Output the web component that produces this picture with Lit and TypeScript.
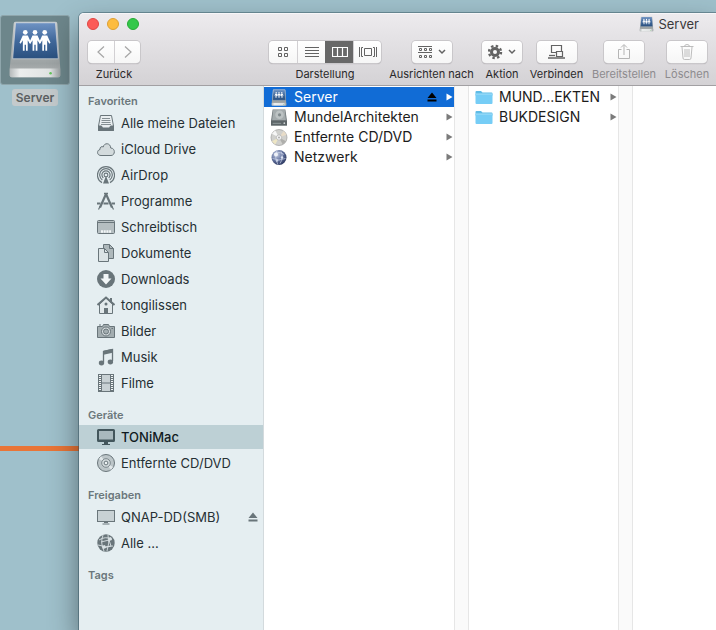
import { LitElement, css, html, svg, type TemplateResult } from "lit";
import { customElement, state } from "lit/decorators.js";
import { classMap } from "lit/directives/class-map.js";

type Icon = TemplateResult;

interface Entry {
  label: string;
  icon: Icon;
  eject?: boolean;
}

const person = (x: number) => svg`
  <g transform="translate(${x} 0)">
    <circle cx="0" cy="16.800" r="2.400" />
    <path d="M-2.600 20H2.600L6 27.500 4.800 28.500 2.500 25V35.800H.7V29.500H-.7V35.800H-2.500V25L-4.800 28.500-6 27.500Z" />
  </g>`;

const driveShape = svg`
  <defs>
    <linearGradient id="panel" x1="0" y1="0" x2="0" y2="1">
      <stop offset="0" stop-color="#6f93c4" /><stop offset=".5" stop-color="#41699c" /><stop offset="1" stop-color="#2a507f" />
    </linearGradient>
    <linearGradient id="shell" x1="0" y1="0" x2="0" y2="1">
      <stop offset="0" stop-color="#c9cdce" /><stop offset=".75" stop-color="#9da3a4" /><stop offset="1" stop-color="#b4b8b9" />
    </linearGradient>
    <linearGradient id="front" x1="0" y1="0" x2="1" y2="0">
      <stop offset="0" stop-color="#b5babb" /><stop offset=".2" stop-color="#eceeee" /><stop offset=".8" stop-color="#dfe2e2" /><stop offset="1" stop-color="#9da3a4" />
    </linearGradient>
  </defs>
  <path d="M15 6H56Q58 6 58 8L61 54V61Q61 63 59 63H11Q9 63 9 61V54L13 8Q13 6 15 6Z" fill="url(#shell)" />
  <path d="M15 7H56L59 44H12Z" fill="url(#panel)" stroke="#d5dade" stroke-width=".7" />
  <path d="M9 54H61V61Q61 63 59 63H11Q9 63 9 61Z" fill="url(#front)" />
  <circle cx="51" cy="59" r="1.300" fill="#62c45a" />
  <g fill="#fff">${person(25)}${person(35)}${person(45)}</g>`;

const drive = html`<svg viewBox="0 0 70 70" aria-hidden="true">${driveShape}</svg>`;
const smallDrive = html`<svg viewBox="6 4 58 61" aria-hidden="true">${driveShape}</svg>`;

const line = (body: unknown): Icon => html`
  <svg viewBox="0 0 18 18" fill="none" stroke="currentColor" aria-hidden="true">${body}</svg>`;

const side = {
  allFiles: line(svg`
    <path d="M3.500 1.500H14.500L16.500 12V16.500H1.500V12Z" fill="#e9eef0" />
    <path d="M1.500 12H4.500L5.500 14H12.500L13.500 12H16.500V16.500H1.500Z" fill="currentColor" />
    <path d="M5 4.500H13M4.500 6.500H13.500M4.500 8.500H13.500M4 10.500H14" stroke-width=".8" />`),
  cloud: line(svg`
    <path d="M4 15.500C-.5 15.500-.3 10 3 9.500 2.500 7 5 6 6.200 7 7 2.500 13.500 2.500 13.700 8 18.500 8 18.500 15.500 14 15.500Z" fill="#d3dbdd" />`),
  airdrop: line(svg`
    <path d="M5 16.600A8.500 8.500 0 1 1 13 16.600M5.300 14A6.300 6.300 0 1 1 12.700 14M6.300 12A4.100 4.100 0 1 1 11.700 12" stroke-width="1.200" />
    <circle cx="9" cy="9" r="1.900" stroke-width="1.100" /><path d="M9 10L6 17.500H12Z" fill="currentColor" stroke="none" />`),
  apps: line(svg`
    <path d="M9 2L3 15.500M9 2L15 15.500" stroke-width="2.200" />
    <path d="M7 1.500H11" stroke-width="1.500" /><path d="M0 11.500H3.500M6.500 11.500H11.500M14.500 11.500H18" stroke-width="2" />
    <path d="M1.500 17.500L3 14.500M16.500 17.500L15 14.500" stroke-width="1.200" />`),
  desktop: line(svg`
    <rect x=".5" y="2.500" width="17" height="13" rx="1" fill="#b5bec1" />
    <path d="M1 4.500H17" stroke-width="1" /><path d="M4 13.500H14" stroke="#f2f6f7" stroke-width="2.500" stroke-dasharray="2 .7" />`),
  documents: line(svg`
    <path d="M6.500 .5H12.500L16.500 4.500V14.500H6.500Z" fill="#aeb8bb" /><path d="M12.500 .5V4.500H16.500" />
    <path d="M1.500 4.500H7.500L11.500 8.500V17.500H1.500Z" fill="#dbe3e5" /><path d="M7.500 4.500V8.500H11.500" />`),
  downloads: line(svg`
    <circle cx="9" cy="9" r="9" fill="currentColor" stroke="none" />
    <path d="M6.500 4H11.500V8.500H14.500L9 14.500 3.500 8.500H6.500Z" fill="#f2f6f7" stroke="none" />`),
  home: line(svg`
    <path d="M2.500 8V17.500H15.500V8L9 2Z" fill="#e2e9eb" /><path d="M.5 9L9 1.500 17.500 9" stroke-width="2" />
    <path d="M14 2V6" stroke-width="2" /><rect x="7" y="12" width="4" height="5.500" fill="currentColor" stroke="none" />
    <circle cx="9" cy="8" r="1.500" fill="currentColor" stroke="none" />`),
  camera: line(svg`
    <path d="M.5 4.500H5.500L6.500 2.500H11.500L12.500 4.500H17.500V15.500H.5Z" fill="#a3adb0" />
    <circle cx="9" cy="9.500" r="4.500" fill="#d5dcde" /><circle cx="9" cy="9.500" r="2.500" fill="#a3adb0" />
    <path d="M2 3H4M14.500 6.500H16" />`),
  music: line(svg`
    <path d="M6.500 14V3.500L15.500 1.500V13" stroke-width="1.300" /><path d="M6.500 2.800L15.500 .8V4.800L6.500 6.800Z" fill="currentColor" stroke="none" />
    <ellipse cx="4.500" cy="15" rx="2.700" ry="2.400" fill="currentColor" stroke="none" />
    <ellipse cx="13.400" cy="14" rx="2.700" ry="2.400" fill="currentColor" stroke="none" />`),
  film: line(svg`
    <rect x="1.500" y=".5" width="15" height="17" fill="#c8d1d4" /><path d="M4.500 1V17M13.500 1V17M4.500 9H13.500" />
    <path d="M3 1V17M15 1V17" stroke="#f2f6f7" stroke-width="2" /><path d="M3 2V17M15 2V17" stroke-width="2" stroke-dasharray="1 1" />`),
  imac: line(svg`
    <rect x="1" y="2" width="16" height="11" rx=".5" fill="#a9b9be" stroke-width="2" />
    <path d="M1 12.500H17" stroke-width="2" /><path d="M7 14H11V16H13V17H5V16H7Z" fill="currentColor" stroke="none" />`),
  disc: line(svg`
    <circle cx="9" cy="9" r="8.500" fill="#bcc5c8" /><path d="M9 9L2 5 4 2Z M9 9L16 13 14 16Z" fill="#e2e8ea" stroke="none" />
    <circle cx="9" cy="9" r="4.300" fill="#d5dcde" stroke-width=".8" /><circle cx="9" cy="9" r="1.900" fill="#eef3f4" />`),
  screen: line(svg`
    <rect x=".5" y="2.500" width="17" height="11" fill="#c8d1d4" /><path d="M7 14.500H11M5.500 16H12.500" />`),
  globe: line(svg`
    <circle cx="9" cy="9" r="8.700" fill="currentColor" stroke="none" />
    <path d="M2 6Q8 2 15 5M1 11Q9 14 16 12M6 1Q3 9 7 17M11 1Q13 9 10 17M4 8L12 6 14 12 6 14" stroke="#d9e1e4" stroke-width=".9" />
    <path d="M11 4L14 3 15 6 12 7ZM5 12L8 11 9 14 6 15Z" fill="#d9e1e4" stroke="none" />`),
};

const hardDisk = html`
  <svg viewBox="0 0 16 16" aria-hidden="true">
    <path d="M2 .5H14L15.500 11V15.500H.5V11Z" fill="#70787b" /><path d="M2.500 1H13.500L14.500 10.500H1.500Z" fill="#a4abad" />
    <circle cx="8.500" cy="5.500" r="4" fill="#bcc2c3" /><circle cx="8.500" cy="5.500" r="1.500" fill="#80898c" />
    <path d="M.5 11H15.500V15.500H.5Z" fill="#5d6568" /><path d="M2 13.500H10" stroke="#8e9698" /><circle cx="13" cy="13.300" r=".8" fill="#cfd5d6" />
  </svg>`;
const shinyDisc = html`
  <svg viewBox="0 0 18 18" aria-hidden="true">
    <circle cx="9" cy="9" r="8.500" fill="#d0d0cd" stroke="#999" stroke-width=".7" />
    <path d="M9 9L1.500 5 5 1.500Z" fill="#f6f6f6" /><path d="M9 9L16.500 13 13 16.500Z" fill="#aeaeab" />
    <path d="M9 9L5 16.500 1.500 13Z" fill="#eee6c4" /><path d="M9 9L17 6 14 2Z" fill="#e8dcc8" />
    <circle cx="9" cy="9" r="2.800" fill="#f4f4f4" stroke="#a8a8a8" stroke-width=".7" /><circle cx="9" cy="9" r="1" fill="#aaa" />
  </svg>`;
const network = html`
  <svg viewBox="0 0 18 17" aria-hidden="true">
    <defs><radialGradient id="ball" cx=".35" cy=".3" r=".8">
      <stop offset="0" stop-color="#c2cbe2" /><stop offset=".5" stop-color="#6474a0" /><stop offset="1" stop-color="#202c53" />
    </radialGradient></defs>
    <circle cx="9" cy="8.500" r="7.500" fill="url(#ball)" />
    <path d="M4 5.500Q9 1.500 14 5.500M2.500 9.500Q9 12.500 15.500 9.500M7 1.500Q4 8.500 8 15.500M11 2.500Q14 8.500 10 14.500" fill="none" stroke="#dce3f3" stroke-width=".6" />
    <circle cx="6" cy="5.500" r="2" fill="#eef1f8" /><circle cx="12" cy="8.500" r="1.200" fill="#dce3f3" /><circle cx="7" cy="11.500" r="1.200" fill="#c7d0e6" />
  </svg>`;
const folder = html`
  <svg viewBox="0 0 18 16" aria-hidden="true">
    <path d="M.5 2.500Q.5 1.500 1.500 1.500H6L7.500 3H16.500Q17.500 3 17.500 4V6H.5Z" fill="#5ebbe6" />
    <path d="M.5 4.500H17.500V13.500Q17.500 14.500 16.500 14.500H1.500Q.5 14.500 .5 13.500Z" fill="#76cdf6" /><path d="M.5 4.500H17.500" stroke="#a5e0fa" />
  </svg>`;
const eject = html`
  <svg class="eject" viewBox="0 0 10 10" fill="currentColor" aria-hidden="true"><path d="M5 .5L9.500 6H.5ZM.5 7.500H9.500V9.500H.5Z" /></svg>`;
const arrow = html`
  <svg class="arrow" viewBox="0 0 7 8" fill="currentColor" aria-hidden="true"><path d="M.5 .5L6.500 4 .5 7.500Z" /></svg>`;

const tool = (width: number, body: unknown) => html`
  <svg class="glyph" width=${width} height="18" viewBox="0 0 ${width} 18" fill="none" stroke="currentColor" aria-hidden="true">${body}</svg>`;
const chevron = svg`<path d="M0 0L3 3 6 0" stroke-width="1.500" />`;

const tools = {
  back: tool(12, svg`<path d="M9 3.500L3 9 9 14.500" stroke-width="1.200" />`),
  forward: tool(12, svg`<path d="M3 3.500L9 9 3 14.500" stroke-width="1.200" />`),
  grid: tool(12, svg`<path d="M1.500 4.500h3v3h-3zM7.500 4.500h3v3h-3zM1.500 10.500h3v3h-3zM7.500 10.500h3v3h-3z" />`),
  list: tool(14, svg`<path d="M0 4.500H14M0 7.500H14M0 10.500H14M0 13.500H14" />`),
  columns: tool(16, svg`<path d="M.5 4.500H15.500V13.500H.5ZM5.500 4.500V13.500M10.500 4.500V13.500" stroke-width="1.200" />`),
  flow: tool(18, svg`<path d="M5.500 5.500H12.500V12.500H5.500ZM.5 4V14M17.500 4V14M4 4.500H2.500V13.500H4M14 4.500H15.500V13.500H14" />`),
  arrange: tool(28, svg`
    <path d="M0 3.500H14M1.500 5.500h2v2h-2zM6.500 5.500h2v2h-2zM11.500 5.500h2v2h-2zM0 9.500H14M1.500 12.500h2v2h-2zM6.500 12.500h2v2h-2zM11.500 12.500h2v2h-2z" />
    <g transform="translate(21 7)">${chevron}</g>`),
  gear: tool(28, svg`
    <circle cx="7" cy="9" r="3.500" stroke-width="3" /><circle cx="7" cy="9" r="6" stroke-width="2.400" stroke-dasharray="2.400 2.312" />
    <g transform="translate(21 7)">${chevron}</g>`),
  connect: tool(18, svg`
    <path d="M3.500 2.500H13.500V9.500H3.500Z" stroke-width="1.200" /><path d="M8.500 8.500H14.500V13.500H8.500Z" fill="#f8f8f8" stroke-width="1.200" />
    <path d="M1 12.500H7" stroke-width="1.300" /><path d="M0 15H17" stroke-width="1.500" />`),
  share: tool(14, svg`<path d="M4.500 6.500H1.500V15.500H12.500V6.500H9.500M7 12V2M4 4.500L7 1.500 10 4.500" />`),
  trash: tool(14, svg`
    <path d="M.5 3.500H13.500M4.500 3.500Q4.500 1.500 7 1.500 9.500 1.500 9.500 3.500M2 4L3 15Q3 16.500 4.500 16.500H9.500Q11 16.500 11 15L12 4M5 6V14M7 6V14M9 6V14" stroke-width=".9" />`),
};

const SIDEBAR: { title: string; entries: Entry[] }[] = [
  {
    title: "Favoriten",
    entries: [
      { label: "Alle meine Dateien", icon: side.allFiles },
      { label: "iCloud Drive", icon: side.cloud },
      { label: "AirDrop", icon: side.airdrop },
      { label: "Programme", icon: side.apps },
      { label: "Schreibtisch", icon: side.desktop },
      { label: "Dokumente", icon: side.documents },
      { label: "Downloads", icon: side.downloads },
      { label: "tongilissen", icon: side.home },
      { label: "Bilder", icon: side.camera },
      { label: "Musik", icon: side.music },
      { label: "Filme", icon: side.film },
    ],
  },
  {
    title: "Geräte",
    entries: [
      { label: "TONiMac", icon: side.imac },
      { label: "Entfernte CD/DVD", icon: side.disc },
    ],
  },
  {
    title: "Freigaben",
    entries: [
      { label: "QNAP-DD(SMB)", icon: side.screen, eject: true },
      { label: "Alle ...", icon: side.globe },
    ],
  },
  { title: "Tags", entries: [] },
];

const VOLUMES: Entry[] = [
  { label: "Server", icon: smallDrive, eject: true },
  { label: "MundelArchitekten", icon: hardDisk },
  { label: "Entfernte CD/DVD", icon: shinyDisc },
  { label: "Netzwerk", icon: network },
];

const FOLDERS: Entry[] = [
  { label: "MUND...EKTEN", icon: folder },
  { label: "BUKDESIGN", icon: folder },
];

@customElement("finder-sidebar")
export class FinderSidebar extends LitElement {
  @state() private selected = "TONiMac";

  static styles = css`
    :host { display: block; padding-top: 5px; background: #e5eef1; border-right: 1px solid #d3dadd; }
    section { margin-bottom: 10px; }
    h2 { margin: 0; padding-left: 9px; font-size: 11px; line-height: 20px; font-weight: 600; color: #6b777b; }
    ul { display: grid; gap: 2px; margin: 0; padding: 0; list-style: none; }
    button {
      display: flex; align-items: center; gap: 6px; width: 100%; height: 24px; border: 0; padding: 0 5px 0 18px;
      background: none; font: inherit; color: #263034; text-align: left; white-space: nowrap;
    }
    button svg { flex: none; width: 18px; height: 18px; color: #69757a; }
    button .eject { width: 10px; height: 10px; }
    .label { flex: 1; }
    .selected { background: #bdd0d5; color: #101a1e; font-weight: 500; }
    .selected svg { color: #43565c; }
  `;

  render() {
    return SIDEBAR.map(
      (group) => html`
        <section>
          <h2>${group.title}</h2>
          <ul>
            ${group.entries.map(
              (entry) => html`
                <li>
                  <button class=${classMap({ selected: this.selected === entry.label })} @click=${() => (this.selected = entry.label)}>
                    ${entry.icon}<span class="label">${entry.label}</span>${entry.eject ? eject : ""}
                  </button>
                </li>`,
            )}
          </ul>
        </section>`,
    );
  }
}

@customElement("finder-columns")
export class FinderColumns extends LitElement {
  @state() private selected = "Server";

  static styles = css`
    :host { display: grid; grid-template-columns: 205px 164px minmax(0, 1fr); background: #fff; font-size: 14px; }
    ul { margin: 0; padding: 1px 0 0; list-style: none; border-right: 14px solid #fafafa; position: relative; }
    ul::before, ul::after { content: ""; position: absolute; top: 0; bottom: 0; right: 0; width: 1px; background: #e6e6e6; }
    ul::after { right: -14px; }
    button {
      display: flex; align-items: center; gap: 6px; width: 100%; height: 20px; border: 0; padding: 0 2px 0 6px;
      background: none; font: inherit; color: #1c1c1c; text-align: left; white-space: nowrap;
    }
    button svg { flex: none; width: 18px; height: 17px; }
    button .arrow { width: 7px; height: 8px; color: #7b7b7b; }
    button .eject { width: 10px; height: 10px; margin-right: 3px; color: #000; }
    .label { flex: 1; }
    .selected { background: #116cd6; color: #fff; }
    .selected .arrow { color: #fff; }
  `;

  private column(entries: Entry[]) {
    return html`
      <ul>
        ${entries.map(
          (entry) => html`
            <li>
              <button class=${classMap({ selected: this.selected === entry.label })} @click=${() => (this.selected = entry.label)}>
                ${entry.icon}<span class="label">${entry.label}</span>${entry.eject ? eject : ""}${arrow}
              </button>
            </li>`,
        )}
      </ul>`;
  }

  render() {
    return html`${this.column(VOLUMES)}${this.column(FOLDERS)}<div></div>`;
  }
}

@customElement("finder-toolbar")
export class FinderToolbar extends LitElement {
  @state() private view = "Spalten";

  static styles = css`
    :host {
      display: block; background: linear-gradient(#edebee, #d4d2d5); border-bottom: 1px solid #a2a0a3;
      border-radius: 5px 0 0; box-shadow: inset 0 1px #f7f6f8;
    }
    .titlebar { display: flex; align-items: center; justify-content: space-between; height: 22px; padding: 0 17px 0 8px; }
    .lights { display: flex; gap: 8px; }
    .lights button { width: 12px; height: 12px; padding: 0; border: 1px solid #df4744; border-radius: 50%; background: #fc5b57; }
    .lights .minimise { background: #fdbc40; border-color: #dea034; }
    .lights .zoom { background: #34c84a; border-color: #27aa35; }
    h1 { display: flex; align-items: center; gap: 4px; margin: 0; font-size: 13px; font-weight: 400; color: #3a393b; }
    h1 svg { width: 15px; height: 16px; }
    .tools {
      display: grid; grid-template-columns: 52px minmax(0, 1fr) 112px 85px 40px 53px 66px 44px; gap: 8px;
      padding: 6px 7px 3px 9px;
    }
    .item { display: flex; flex-direction: column; align-items: center; gap: 3px; }
    .views { grid-column: 3; }
    .caption { font-size: 11px; line-height: 16px; color: #2a292b; white-space: nowrap; }
    .group { display: flex; border-radius: 4px; background: linear-gradient(#fff, #f6f6f6); box-shadow: 0 0 0 1px #c9c7ca, 0 1px 1px #9f9da0; }
    .group button {
      display: grid; place-items: center; width: 40px; height: 22px; margin: 0; padding: 0; border: 0;
      border-radius: 4px; background: none; color: #636363;
    }
    .pair button { width: 26px; border-radius: 0; color: #a5a5a5; }
    .four button { width: 28px; border-radius: 0; }
    .pair button + button, .four button + button { border-left: 1px solid #d2d0d3; }
    .four button.active { background: #686868; border-color: #686868; color: #fff; }
    .disabled .caption { color: #8d8b8e; }
    .disabled button { color: #b5b5b5; }
    .glyph { display: block; }
  `;

  private single(label: string, icon: Icon, disabled = false) {
    return html`
      <div class=${classMap({ item: true, disabled })}>
        <div class="group"><button aria-label=${label} ?disabled=${disabled}>${icon}</button></div>
        <span class="caption">${label}</span>
      </div>`;
  }

  render() {
    const views: [string, Icon][] = [
      ["Symbole", tools.grid],
      ["Liste", tools.list],
      ["Spalten", tools.columns],
      ["Cover Flow", tools.flow],
    ];
    return html`
      <div class="titlebar">
        <div class="lights">
          <button aria-label="Schließen"></button>
          <button class="minimise" aria-label="Minimieren"></button>
          <button class="zoom" aria-label="Vergrößern"></button>
        </div>
        <h1>${smallDrive}Server</h1>
      </div>
      <div class="tools">
        <div class="item">
          <div class="group pair">
            <button aria-label="Zurück">${tools.back}</button><button aria-label="Vorwärts">${tools.forward}</button>
          </div>
          <span class="caption">Zurück</span>
        </div>
        <div class="item views">
          <div class="group four">
            ${views.map(
              ([name, icon]) => html`
                <button
                  class=${classMap({ active: this.view === name })}
                  aria-label=${name}
                  aria-pressed=${this.view === name}
                  @click=${() => (this.view = name)}
                >${icon}</button>`,
            )}
          </div>
          <span class="caption">Darstellung</span>
        </div>
        ${this.single("Ausrichten nach", tools.arrange)} ${this.single("Aktion", tools.gear)}
        ${this.single("Verbinden", tools.connect)} ${this.single("Bereitstellen", tools.share, true)}
        ${this.single("Löschen", tools.trash, true)}
      </div>`;
  }
}

@customElement("app-root")
export class AppRoot extends LitElement {
  static styles = css`
    :host {
      display: grid; grid-template-columns: 79px minmax(0, 1fr); min-height: 100vh; overflow: hidden;
      font: 13px/18px Inter, "Liberation Sans", sans-serif;
      background: linear-gradient(transparent 446px, #e97537 446px, #e97537 451px, transparent 451px), #9fc0cb;
    }
    .desktop { padding-top: 15px; }
    .volume { display: grid; justify-items: center; gap: 4px; width: 70px; padding: 0; border: 0; background: none; font: inherit; }
    .tile { display: block; box-sizing: border-box; width: 100%; border: 1px solid #8fa6ac; border-radius: 3px; background: #6d868b; }
    .tile svg { display: block; width: 100%; }
    .name { padding: 0 4px; border-radius: 3px; background: #c4cacc; color: #5b5f61; font-size: 12px; line-height: 17px; font-weight: 600; }
    .window {
      display: grid; grid-template-rows: auto 1fr; margin-top: 13px; border-radius: 5px 0 0;
      box-shadow: 0 0 0 1px rgba(45, 75, 88, 0.45), 0 14px 30px rgba(0, 0, 0, 0.45);
    }
    .body { display: grid; grid-template-columns: 185px minmax(0, 1fr); }
  `;

  render() {
    return html`
      <div class="desktop">
        <button class="volume"><span class="tile">${drive}</span><span class="name">Server</span></button>
      </div>
      <main class="window">
        <finder-toolbar></finder-toolbar>
        <div class="body">
          <finder-sidebar></finder-sidebar>
          <finder-columns></finder-columns>
        </div>
      </main>`;
  }
}
